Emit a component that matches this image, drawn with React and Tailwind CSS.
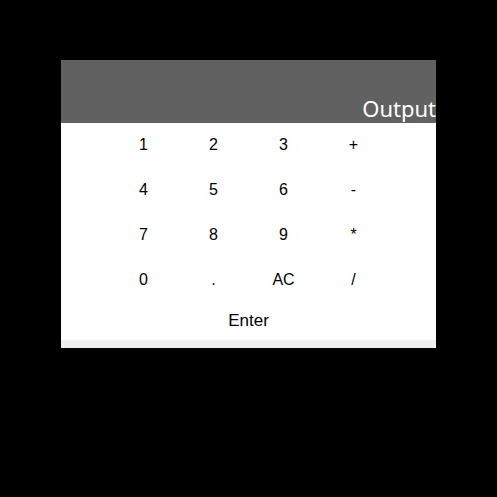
import React from 'react';

const keys = ['1', '2', '3', '+', '4', '5', '6', '-', '7', '8', '9', '*', '0', '.', 'AC', '/'];

export default function App() {
  return (
    <div className="w-[497px] h-[497px] bg-black pt-[60px] pl-[61px]">
      <div className="w-[375px] bg-white" style={{ fontFamily: '"Liberation Sans", Arial, sans-serif' }}>
        <div className="h-[63px] bg-[#616161] flex items-end justify-end">
          <span
            className="text-white text-[22px] leading-none mb-[4px] h-[22px]"
            style={{ fontFamily: '"Noto Sans", sans-serif' }}
          >
            Output
          </span>
        </div>
        <div className="grid grid-cols-4 w-[280px] mx-auto -mt-px">
          {keys.map((k) => (
            <button key={k} className="h-[45px] flex items-center justify-center text-[16px] text-black">
              {k}
            </button>
          ))}
        </div>
        <button className="w-full h-[38px] flex items-center justify-center text-[17px] text-black">
          Enter
        </button>
        <div className="h-[8px] bg-[#efefef]" />
      </div>
    </div>
  );
}
